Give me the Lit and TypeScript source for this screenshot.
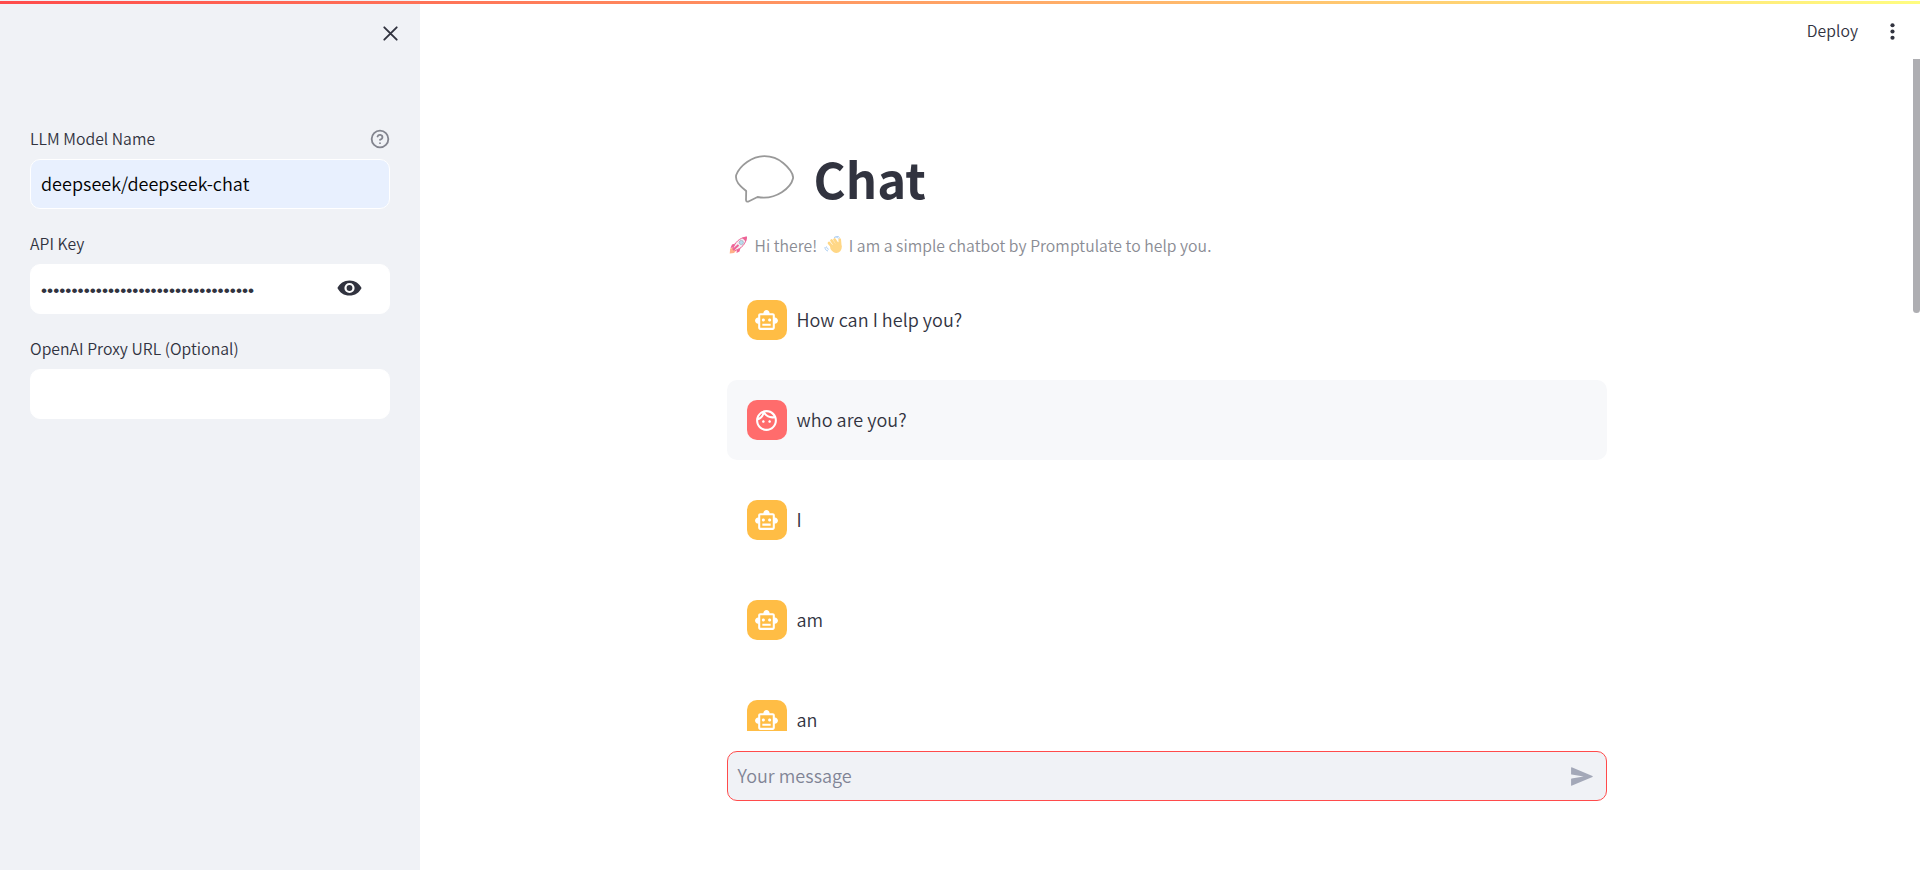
import { LitElement, html, css, svg } from "lit";
import { customElement, property } from "lit/decorators.js";

const robot = svg`<path d="M20 9V7c0-1.1-.9-2-2-2h-3c0-1.66-1.34-3-3-3S9 3.34 9 5H6c-1.1 0-2 .9-2 2v2c-1.66 0-3 1.34-3 3s1.34 3 3 3v4c0 1.1.9 2 2 2h12c1.1 0 2-.9 2-2v-4c1.66 0 3-1.34 3-3s-1.34-3-3-3zm-2 10H6V7h12v12zm-9-6c-.83 0-1.5-.67-1.5-1.5S8.17 10 9 10s1.5.67 1.5 1.5S9.83 13 9 13zm7.5-1.5c0 .83-.67 1.5-1.5 1.5s-1.5-.67-1.5-1.5.67-1.5 1.5-1.5 1.5.67 1.5 1.5zM8 15h8v2H8v-2z"/>`;
const face = svg`<path d="M10.25 13c0 .69-.56 1.25-1.25 1.25S7.75 13.69 7.75 13s.56-1.25 1.25-1.25 1.25.56 1.25 1.25zM15 11.75c-.69 0-1.25.56-1.25 1.25s.56 1.25 1.25 1.25 1.25-.56 1.25-1.25-.56-1.25-1.25-1.25zm7 .25c0 5.52-4.48 10-10 10S2 17.52 2 12 6.48 2 12 2s10 4.48 10 10zM10.66 4.12C12.06 6.44 14.6 8 17.5 8c.46 0 .91-.05 1.34-.12C17.44 5.56 14.9 4 12 4c-.46 0-.91.05-1.34.12zM4.42 9.47c1.71-.97 3.03-2.55 3.66-4.44C6.37 6 5.05 7.58 4.42 9.47zM20 12c0-.78-.12-1.53-.33-2.24-.7.15-1.42.24-2.17.24-3.13 0-5.92-1.44-7.76-3.69C8.69 8.87 6.6 10.88 4 11.86c.01.04 0 .09 0 .14 0 4.42 3.58 8 8 8s8-3.58 8-8z"/>`;

@customElement("chat-message")
class ChatMessage extends LitElement {
  @property() role = "assistant";
  @property() text = "";
  static styles = css`
    :host { display: block; }
    .message { display: flex; gap: 10px; height: 80px; padding: 20px; box-sizing: border-box; border-radius: 10px; }
    .message.user { background: #f7f8fa; }
    .avatar { flex: none; display: grid; place-items: center; width: 40px; height: 40px; border-radius: 10px; background: #ffbd45; }
    .user .avatar { background: #ff6c6c; }
    svg { width: 25px; height: 25px; fill: #fff; display: block; margin-right: 1px; }
    .text { line-height: 38px; font-size: 18px; font-weight: 350; letter-spacing: 0.03px; color: #31333f; white-space: nowrap; }
  `;
  render() {
    return html`<div class="message ${this.role}">
      <div class="avatar"><svg viewBox="0 0 24 24">${this.role === "user" ? face : robot}</svg></div>
      <div class="text">${this.text}</div>
    </div>`;
  }
}

@customElement("app-root")
class AppRoot extends LitElement {
  static styles = css`
    :host { display: block; height: 870px; overflow: hidden; font-family: "Noto Sans CJK SC", sans-serif; font-weight: 350; color: #31333f; background: #fff; }
    * { box-sizing: border-box; }
    svg { display: block; flex: none; }
    .app { display: flex; height: 870px; }
    .decoration { position: absolute; top: 1px; left: 0; right: 0; height: 3px; background: linear-gradient(90deg, #ff4b4b, #fffd80); z-index: 2; }
    .sidebar { flex: none; width: 420px; background: #f0f2f6; padding: 20px 30px 0; }
    .close { display: flex; justify-content: flex-end; height: 104px; padding: 1px 0 0; margin-right: -13px; }
    .label { display: flex; justify-content: space-between; align-items: center; height: 29px; font-size: 15.75px; line-height: 29px; margin-bottom: 6px; letter-spacing: 0.03px; }
    .input { display: flex; align-items: center; justify-content: space-between; height: 50px; border-radius: 10px; background: #fff; border: 1px solid #fff; padding: 0 27px 2px 10px; font-size: 18px; letter-spacing: 0.03px; margin-bottom: 20px; }
    .input.filled { background: #e8f0fe; color: #000; }
    .dots { font-family: "Liberation Sans", sans-serif; font-size: 17.3px; font-weight: 400; letter-spacing: 0.04px; padding-top: 5px; white-space: nowrap; }
    .main { flex: 1; display: flex; flex-direction: column; min-width: 0; }
    .header { flex: none; display: flex; justify-content: flex-end; align-items: center; height: 59px; padding: 4px 15px 0 0; gap: 22px; font-size: 15.75px; letter-spacing: 0.04px; }
    .header span { padding-bottom: 2px; }
    .scroll { display: flex; height: 672px; overflow: hidden; }
    .viewport { flex: 1; display: flex; justify-content: center; }
    .thumb { width: 7px; height: 254px; background: #aeaeb2; border-radius: 0 0 4px 4px; }
    .column { width: 880px; }
    h1 { display: flex; align-items: center; gap: 20px; margin: 0; padding: 84px 0 0 8px; height: 156px; font-size: 49px; line-height: 66px; font-weight: 700; }
    h1 span { padding-bottom: 2px; letter-spacing: 0.1px; }
    .caption { display: flex; align-items: center; height: 28px; margin: 16px 0 21px; font-size: 15.75px; letter-spacing: 0.03px; color: #8a8c94; white-space: pre; padding-left: 2px; }
    .caption svg { margin-right: 7px; }
    .caption .wave { margin-right: 6px; margin-left: 3px; }
    .list { display: flex; flex-direction: column; gap: 20px; }
    .bottom { display: flex; justify-content: center; padding: 20px 7px 0 0; }
    .composer { display: flex; align-items: center; justify-content: space-between; width: 880px; height: 50px; padding: 0 12px 0 10px; border: 1px solid #ff4b4b; border-radius: 10px; background: #f0f2f6; color: #808495; font-size: 18px; letter-spacing: 0.03px; }
    .composer span { padding-bottom: 2px; }
  `;

  private messages = [
    { role: "assistant", text: "How can I help you?" },
    { role: "user", text: "who are you?" },
    { role: "assistant", text: "I" },
    { role: "assistant", text: "am" },
    { role: "assistant", text: "an" },
  ];

  render() {
    return html`
      <div class="decoration"></div>
      <div class="app">
        <aside class="sidebar">
          <div class="close">
            <svg width="25" height="25" viewBox="0 0 25 25" stroke="#31333f" stroke-width="1.9" stroke-linecap="round"><path d="M6.300 6.300l12.400 12.400M18.700 6.300L6.300 18.700"/></svg>
          </div>
          <div class="label"><span>LLM Model Name</span>
            <svg width="20" height="20" viewBox="0 0 24 24" fill="none" stroke="#83858f" stroke-width="2.200" stroke-linecap="round" stroke-linejoin="round"><circle cx="12" cy="12" r="10"/><path d="M9.09 9a3 3 0 0 1 5.83 1c0 2-3 3-3 3M12 17h.01"/></svg>
          </div>
          <div class="input filled">deepseek/deepseek-chat</div>
          <div class="label"><span>API Key</span></div>
          <div class="input"><span class="dots">${"•".repeat(35)}</span>
            <svg width="25" height="16" viewBox="0 0 25 16"><path fill="#31333f" fill-rule="evenodd" d="M12.5.4C7 .4 2.600 3.500.4 8c2.200 4.500 6.600 7.600 12.100 7.600S22.400 12.500 24.600 8C22.400 3.500 18 .4 12.500.4zm0 2.500a5.100 5.100 0 1 1 0 10.200 5.100 5.100 0 0 1 0-10.200z"/><circle cx="12.500" cy="8" r="2.900" fill="#31333f"/></svg>
          </div>
          <div class="label"><span>OpenAI Proxy URL (Optional)</span></div>
          <div class="input"></div>
        </aside>
        <main class="main">
          <header class="header"><span>Deploy</span>
            <svg width="25" height="25" viewBox="0 0 24 24" fill="#31333f"><circle cx="12" cy="6" r="2"/><circle cx="12" cy="12" r="2"/><circle cx="12" cy="18" r="2"/></svg>
          </header>
          <div class="scroll">
            <div class="viewport"><div class="column">
              <h1><svg width="59" height="48" viewBox="0 0 59 48" fill="none" stroke="#999" stroke-width="1.8" stroke-linejoin="round"><path d="M29.300 1.200C17 1.200 5 10.500 1.200 20C-.3 27 6 31.500 11.200 36L11 45C11 46.800 12.500 47 14 46.200L22.500 42C42 45.500 56 32 58 23.500C59 19 53 12 48.500 8.300C43 3.500 36 1.200 29.300 1.200z"/></svg><span>Chat</span></h1>
              <div class="caption"><svg width="19" height="18" viewBox="0 0 19 18"><path d="M6.500 7.500L3 8.500 1.500 12l4-.8zM11.500 12L10.500 15.500l-3 1.500L8 13z" fill="#ed6396"/><path d="M1.200 12.500l4-1 2.500 2.500L5 17l-4.300.6z" fill="#ffb08a"/><path d="M4 12.300C6 6.500 10 2 17.500 1c-.5 7-5 11.500-11.500 13.500z" fill="#f4eef3" stroke="#ed6396" stroke-width="1"/><path d="M13 1.800L18 .6 17 5.800z" fill="#ed6396"/><circle cx="12.300" cy="6.500" r="2.100" fill="#b9dcf0" stroke="#9baebb" stroke-width=".7"/><path d="M4 14l5.500-5" stroke="#ed6396" stroke-width="2"/></svg><span class="hi">Hi there!</span><span> </span><svg class="wave" width="19" height="18" viewBox="0 0 19 18"><path d="M5 7l6 7M7.500 4.500l5 7M10.500 3.500l4 6M15.700 3.600l.6 7" stroke="#ffd786" stroke-width="2.700" stroke-linecap="round"/><path d="M6 10l9-4c3 3 3.500 6 1.500 9-3 3-7 2.500-10-2z" fill="#ffd786"/><path d="M10 1.500c2-.8 3.500-.2 4.500 1M11.500.4c2-.4 3.300.2 4 1.200M1 11c0 2.500 1 3.500 3 4M2.500 10.500c.2 1.700 1 2.500 2.200 2.800" fill="none" stroke="#a9cdf3" stroke-width="1"/></svg><span>I am a simple chatbot by Promptulate to help you.</span></div>
              <div class="list">${this.messages.map((m) => html`<chat-message .role=${m.role} .text=${m.text}></chat-message>`)}</div>
            </div></div>
            <div class="thumb"></div>
          </div>
          <div class="bottom"><div class="composer"><span>Your message</span>
            <svg width="25" height="25" viewBox="0 0 24 24" fill="#a3a8b8"><path d="M2.400 20.900Q2 21 2 20.400V14.500Q2 14 2.600 13.900L14 12 2.600 10.100Q2 10 2 9.500V3.600Q2 3 2.600 3.100L22.500 11.500Q23.200 12 22.500 12.500z"/></svg>
          </div></div>
        </main>
      </div>`;
  }
}
